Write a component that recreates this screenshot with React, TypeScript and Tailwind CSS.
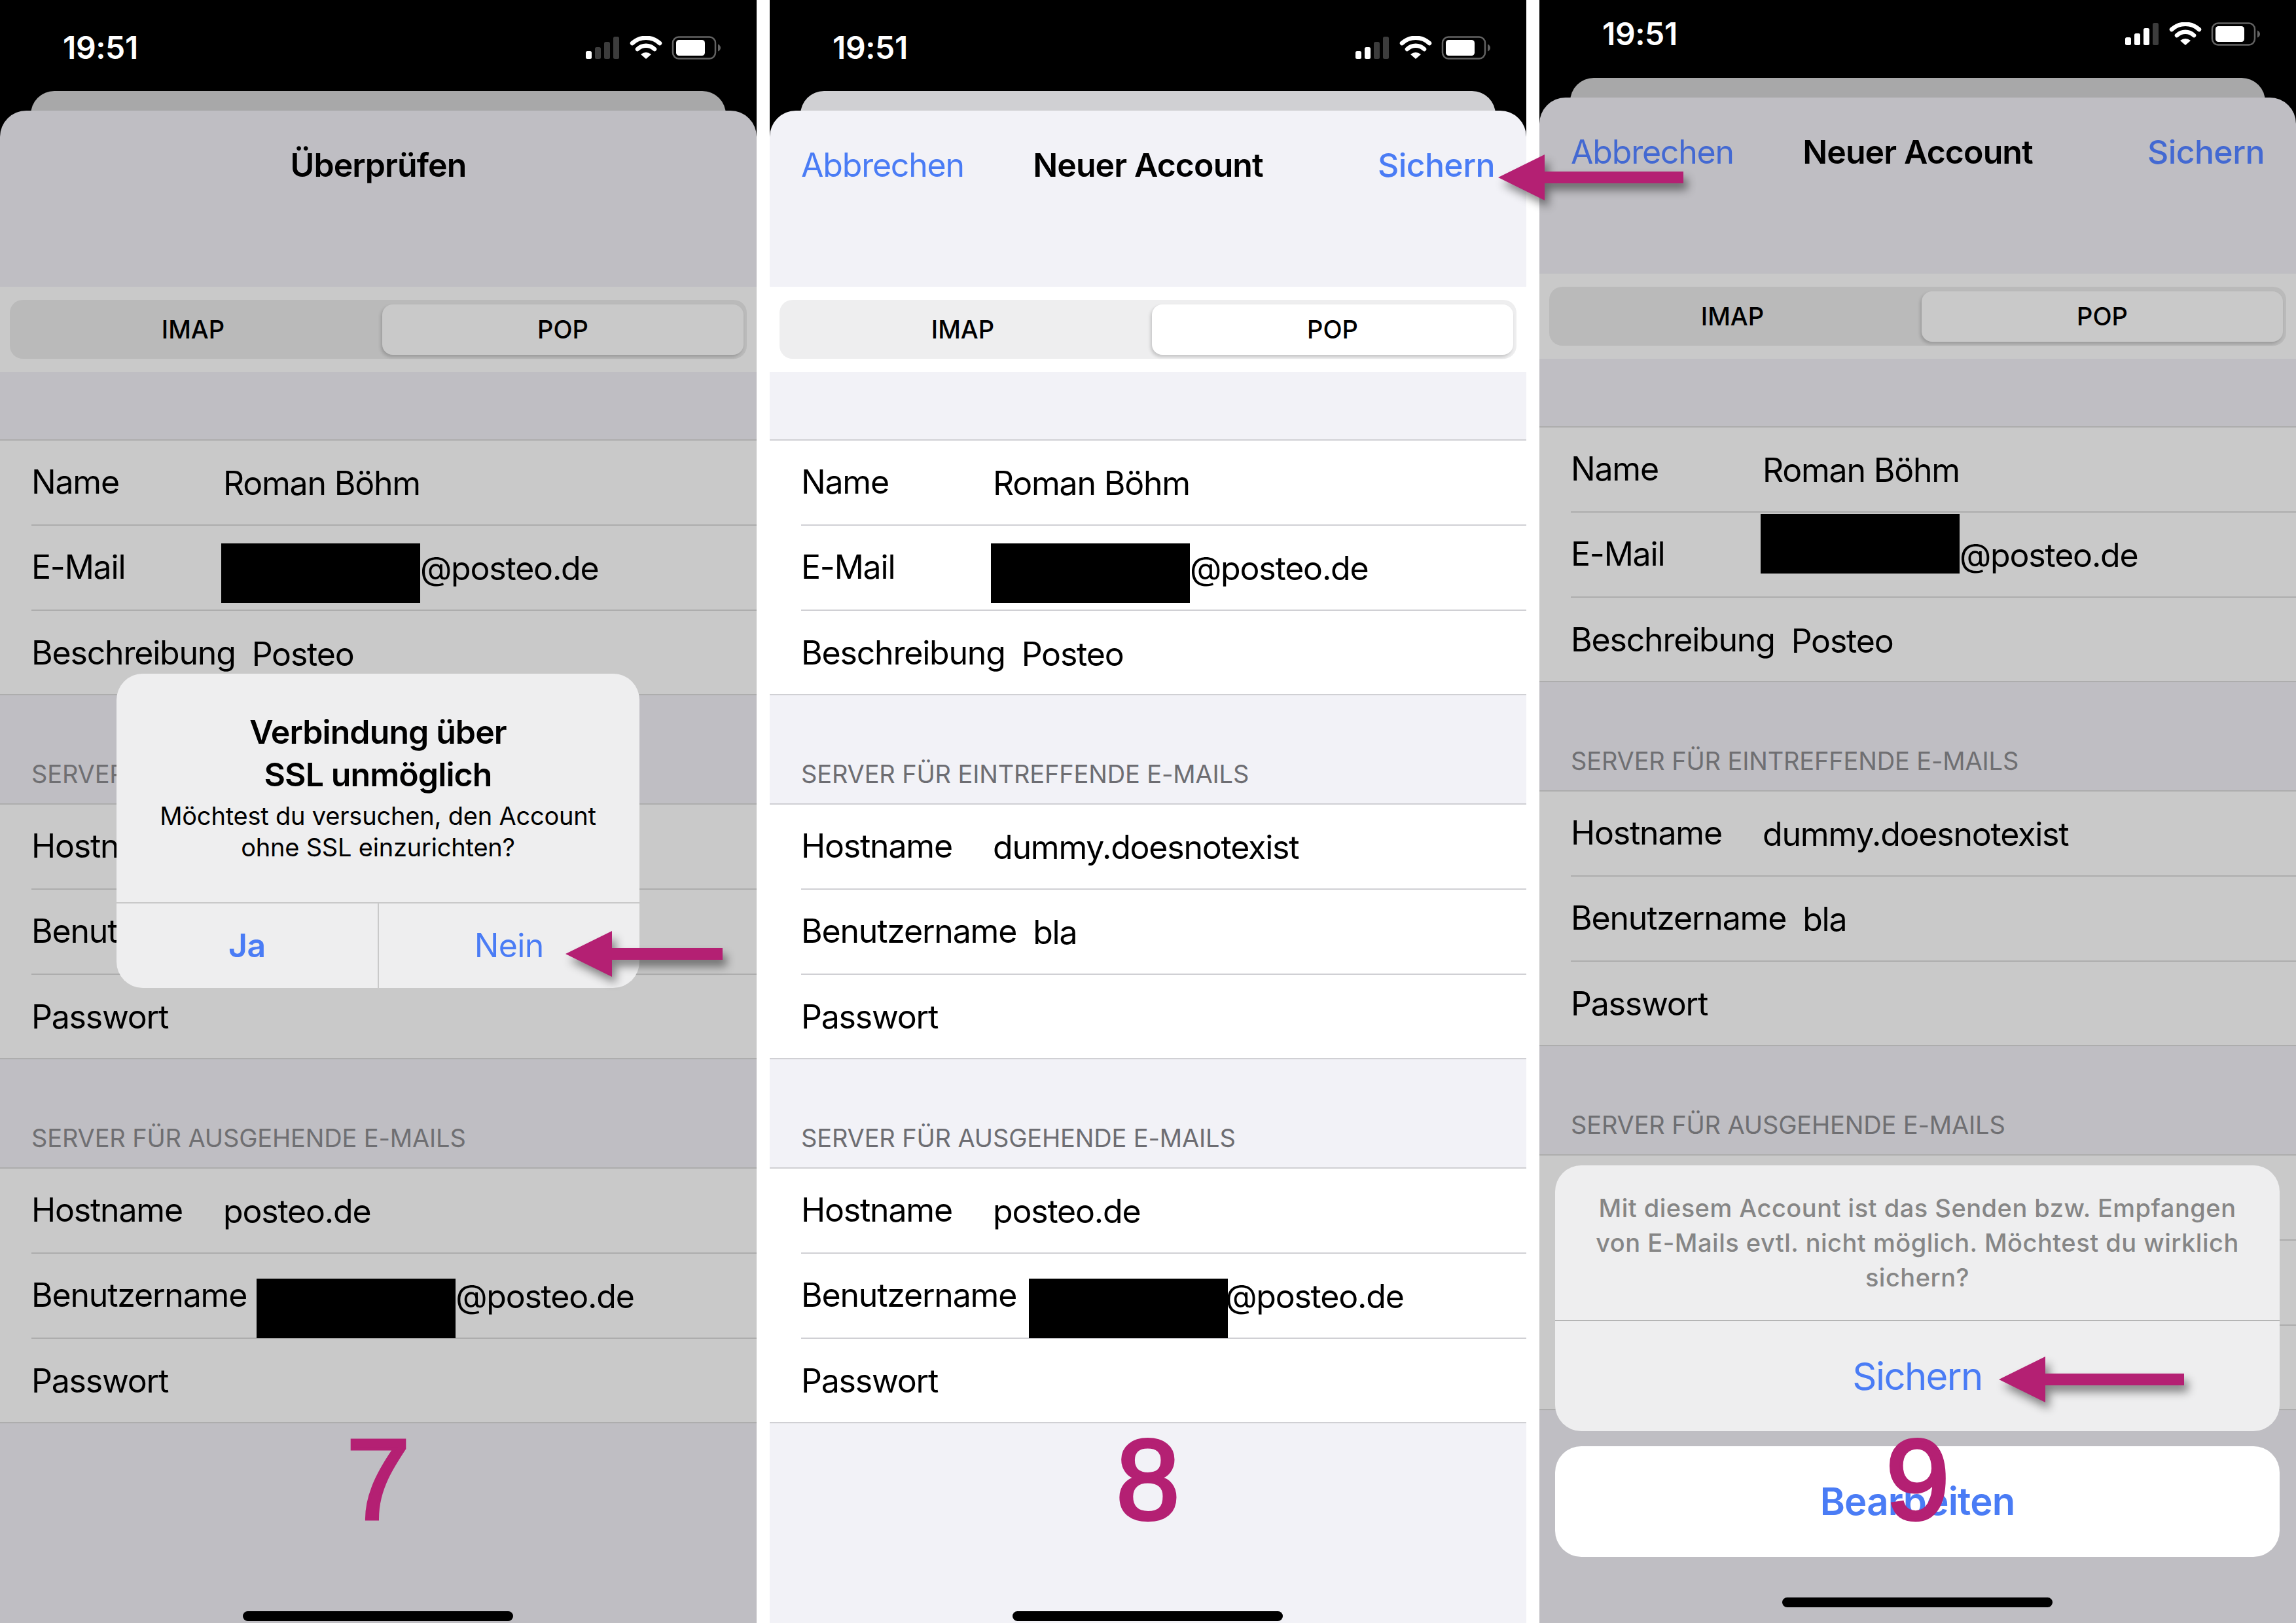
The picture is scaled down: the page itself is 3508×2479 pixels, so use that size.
import React from "react";

function StatusIcons({ lit }: { lit: number }) {
  const bars = [
    { x: 0, y: 22, h: 12 },
    { x: 14, y: 16, h: 18 },
    { x: 28, y: 8, h: 26 },
    { x: 42, y: 0, h: 34 },
  ];
  return (
    <svg width="206" height="36" viewBox="0 0 206 36" className="block">
      {bars.map((b, i) => (
        <rect key={b.x} x={b.x} y={b.y + 1} width="9" height={b.h} rx="2.5" fill={i < lit ? "#fff" : "#3c3c3c"} />
      ))}
      <path d="M71 11 A31 31 0 0 1 113 11" fill="none" stroke="#fff" strokeWidth="6.5" strokeLinecap="round" />
      <path d="M79 20 A19 19 0 0 1 105 20" fill="none" stroke="#fff" strokeWidth="6.5" strokeLinecap="round" />
      <path d="M92 35 L84 28 Q92 22 100 28 Z" fill="#fff" />
      <rect x="133" y="1.5" width="65" height="33" rx="9" fill="none" stroke="#636363" strokeWidth="2.5" />
      <rect x="138" y="6" width="44" height="24" rx="4.5" fill="#fff" />
      <path d="M202 12.5 Q206 14.5 206 18 Q206 21.5 202 23.5 Z" fill="#636363" />
    </svg>
  );
}

function StatusBar({ lit, shifted }: { lit: number; shifted?: boolean }) {
  return (
    <div className={`flex justify-between items-center pl-[96px] pr-[55px] text-white text-[48px] font-semibold tracking-[-0.4px] ${shifted ? "h-[119px] pb-[15px]" : "h-[139px] pt-[6px]"}`}>
      <span>19:51</span>
      <StatusIcons lit={lit} />
    </div>
  );
}

function Segment({ dim }: { dim: boolean }) {
  return (
    <div className={`h-[130px] flex items-center px-[15px] ${dim ? "bg-[#c9c9c9]" : "bg-white"}`}>
      <div className={`w-full h-[90px] rounded-[20px] flex items-center p-[7px] pr-[5px] text-[38px] font-medium ${dim ? "bg-[#bababa]" : "bg-[#eeeeef]"}`}>
        <div className="w-[562px] pr-[16px] text-center">IMAP</div>
        <div className={`flex-1 h-[77px] flex items-center justify-center rounded-[16px] shadow-[-2px_3px_5px_rgba(0,0,0,0.18)] ${dim ? "bg-[#c9c9c9]" : "bg-white"}`}>
          POP
        </div>
      </div>
    </div>
  );
}

type RowData = { label: string; value?: string; box?: string };

function Row({ row, dim, last }: { row: RowData; dim: boolean; last: boolean }) {
  return (
    <div className={`ml-[48px] flex items-center ${last ? "flex-1 pt-[4px]" : `h-[130px] border-b-2 ${dim ? "border-[#adadad]" : "border-[#d0d0d4]"}`}`}>
      <div className="min-w-[293px] pr-[25px] pb-[2px] text-[50px] tracking-[-1.2px] whitespace-nowrap">{row.label}</div>
      <div className="flex items-center pt-[2px] text-[50px] tracking-[-1.2px]">
        {row.box && <div className={`w-[304px] h-[91px] bg-black ${row.box}`} />}
        <span className="whitespace-nowrap">{row.value}</span>
      </div>
    </div>
  );
}

function Group({ rows, dim }: { rows: RowData[]; dim: boolean }) {
  return (
    <div className={`h-[391px] flex flex-col border-y-2 ${dim ? "bg-[#c9c9c9] border-[#adadad]" : "bg-white border-[#d0d0d4]"}`}>
      {rows.map((r, i) => (
        <Row key={r.label} row={r} dim={dim} last={i === rows.length - 1} />
      ))}
    </div>
  );
}

function SectionLabel({ children, dim }: { children: string; dim: boolean }) {
  return (
    <div className={`h-[165px] flex items-end pl-[48px] pb-[21px] text-[38px] leading-[48px] tracking-[-0.15px] ${dim ? "text-[#6f6f72]" : "text-[#6d6d72]"}`}>
      {children}
    </div>
  );
}

function Screen({
  dim,
  lit,
  shifted,
  title,
  actions,
  blue,
  emailBox,
  userBox,
  children,
}: {
  dim: boolean;
  lit: number;
  shifted?: boolean;
  title: string;
  actions: boolean;
  blue: string;
  emailBox: string;
  userBox: string;
  children?: React.ReactNode;
}) {
  return (
    <div className="relative w-[1156px] h-full bg-black flex flex-col overflow-hidden">
      <StatusBar lit={lit} shifted={shifted} />
      <div className={`mx-[47px] h-[70px] rounded-t-[36px] shrink-0 ${dim ? "bg-[#a8a8a9]" : "bg-[#d0d0d3]"}`} />
      <div className={`-mt-[40px] flex-1 flex flex-col rounded-t-[40px] ${dim ? "bg-[#bfbec3]" : "bg-[#f2f2f7]"}`}>
        <div className="h-[269px] pt-[43px] px-[48px]">
          <div className="relative h-[80px] flex items-center justify-between text-[50px] tracking-[-1.2px]">
            <span className={blue}>{actions ? "Abbrechen" : ""}</span>
            <span className="absolute inset-x-0 text-center font-semibold tracking-[-0.9px]">{title}</span>
            <span className={`font-medium tracking-[-0.6px] ${blue}`}>{actions ? "Sichern" : ""}</span>
          </div>
        </div>
        <Segment dim={dim} />
        <div className="h-[103px]" />
        <Group
          dim={dim}
          rows={[
            { label: "Name", value: "Roman Böhm" },
            { label: "E-Mail", value: "@posteo.de", box: emailBox },
            { label: "Beschreibung", value: "Posteo" },
          ]}
        />
        <SectionLabel dim={dim}>SERVER FÜR EINTREFFENDE E-MAILS</SectionLabel>
        <Group
          dim={dim}
          rows={[
            { label: "Hostname", value: "dummy.doesnotexist" },
            { label: "Benutzername", value: "bla" },
            { label: "Passwort" },
          ]}
        />
        <SectionLabel dim={dim}>SERVER FÜR AUSGEHENDE E-MAILS</SectionLabel>
        <Group
          dim={dim}
          rows={[
            { label: "Hostname", value: "posteo.de" },
            { label: "Benutzername", value: "@posteo.de", box: userBox },
            { label: "Passwort" },
          ]}
        />
        <div className="flex-1" />
      </div>
      {children}
    </div>
  );
}

function StepNumber({ children, top }: { children: string; top: string }) {
  return (
    <div className={`absolute inset-x-0 text-center font-['Liberation_Sans'] text-[175px] leading-[175px] text-[#b42073] [-webkit-text-stroke:5px_#b42073] ${top}`}>
      {children}
    </div>
  );
}

function HomeBar({ pos }: { pos: string }) {
  return <div className={`absolute left-[371px] w-[413px] h-[15px] rounded-full bg-black ${pos}`} />;
}

function Alert() {
  return (
    <div className="absolute left-[178px] top-[1029px] w-[799px] h-[480px] rounded-[40px] bg-[#eeeeef] flex flex-col">
      <div className="flex-1 flex flex-col items-center pt-[57px]">
        <div className="text-[50px] leading-[65px] font-semibold tracking-[-0.9px] text-center">
          Verbindung über
          <br />
          SSL unmöglich
        </div>
        <div className="mt-[6px] text-[38px] leading-[48px] tracking-[-0.2px] text-center">
          Möchtest du versuchen, den Account
          <br />
          ohne SSL einzurichten?
        </div>
      </div>
      <div className="h-[131px] flex border-t-2 border-[#c9c9c9] text-[50px] text-[#4a7cf5] tracking-[-0.6px]">
        <div className="flex-1 flex items-center justify-center border-r-2 border-[#c9c9c9] font-semibold">Ja</div>
        <div className="flex-1 flex items-center justify-center">Nein</div>
      </div>
    </div>
  );
}

function ActionSheet() {
  return (
    <div className="absolute left-[24px] top-[1780px] w-[1107px] flex flex-col gap-[23px]">
      <div className="h-[406px] rounded-[40px] bg-[#eeeeef] flex flex-col">
        <div className="h-[236px] flex items-center justify-center text-center text-[38px] leading-[53px] font-medium tracking-[0.5px] text-[#868686]">
          <div>
            Mit diesem Account ist das Senden bzw. Empfangen
            <br />
            von E-Mails evtl. nicht möglich. Möchtest du wirklich
            <br />
            sichern?
          </div>
        </div>
        <div className="flex-1 border-t-2 border-[#b5b5b5] flex items-center justify-center text-[58px] text-[#4a7cf5] tracking-[-1.6px]">
          Sichern
        </div>
      </div>
      <div className="h-[169px] rounded-[40px] bg-white flex items-center justify-center text-[58px] font-semibold text-[#4a7cf5] tracking-[-0.8px]">
        Bearbeiten
      </div>
    </div>
  );
}

function Arrow({ pos, length }: { pos: string; length: number }) {
  return (
    <svg
      width={length}
      height="70"
      viewBox={`0 0 ${length} 70`}
      className={`absolute overflow-visible drop-shadow-[6px_10px_7px_rgba(0,0,0,0.45)] ${pos}`}
    >
      <path d={`M0 35 L71 0 L71 26 L${length} 26 L${length} 44 L71 44 L71 70 Z`} fill="#b42073" />
    </svg>
  );
}

export default function App() {
  return (
    <div className="relative w-[3508px] h-[2479px] overflow-hidden bg-white text-black font-[Inter,sans-serif] flex justify-between">
      <Screen dim lit={1} title="Überprüfen" actions={false} blue="text-[#4a7cf5]" emailBox="-ml-[3px] translate-y-[7px]" userBox="-ml-[10px] translate-y-[18px]">
        <HomeBar pos="top-[2461px]" />
        <StepNumber top="top-[2172px]">7</StepNumber>
        <Alert />
      </Screen>
      <Screen dim={false} lit={2} title="Neuer Account" actions blue="text-[#4a7cf5]" emailBox="-ml-[3px] translate-y-[7px]" userBox="-ml-[6px] -mr-[4px] translate-y-[18px]">
        <HomeBar pos="top-[2461px]" />
        <StepNumber top="top-[2172px]">8</StepNumber>
      </Screen>
      <Screen dim lit={3} shifted title="Neuer Account" actions blue="text-[#4369d2]" emailBox="-ml-[3px] -translate-y-[18px]" userBox="-ml-[10px] translate-y-[18px]">
        <HomeBar pos="top-[2440px]" />
        <ActionSheet />
        <StepNumber top="top-[2172px]">9</StepNumber>
      </Screen>
      <Arrow pos="left-[864px] top-[1422px]" length={240} />
      <Arrow pos="left-[2289px] top-[236px]" length={283} />
      <Arrow pos="left-[3054px] top-[2072px]" length={283} />
    </div>
  );
}
